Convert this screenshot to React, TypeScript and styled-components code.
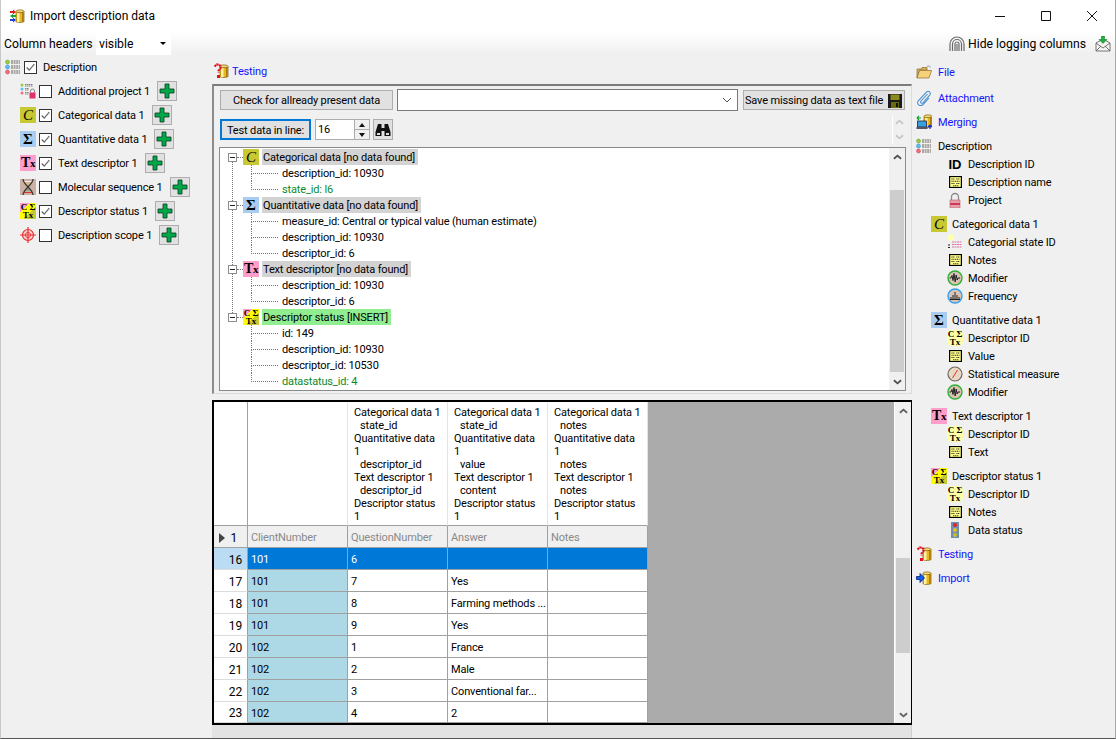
import React from "react"
import styled, { createGlobalStyle } from "styled-components"

const GlobalStyle = createGlobalStyle`
    html, body {
        margin: 0;
        padding: 0;
        background: #f0f0f0;
    }
    * {
        box-sizing: border-box;
    }
`

/* ---------- icons ---------- */

const Svg = styled.svg`
    width: 16px;
    height: 16px;
    flex: none;
    display: block;
`

const Cylinder = () => (
    <g>
        <path d="M7 3.5h8v10c0 1.2-8 1.2-8 0z" fill="#e8b820" stroke="#7a5a10" strokeWidth="0.7" />
        <rect x="8" y="4" width="2.5" height="10" fill="#fff2a8" />
        <rect x="13" y="4" width="1.6" height="10" fill="#b07a10" />
        <ellipse cx="11" cy="3.3" rx="4" ry="1.4" fill="#f6dc70" stroke="#7a5a10" strokeWidth="0.7" />
    </g>
)

const ImportTitleIcon = () => (
    <Svg viewBox="0 0 16 16">
        <Cylinder />
        <path d="M1 3h3V1.5L7 4 4 6.5V5H1z" fill="#e02020" />
        <path d="M7 7H4V5.8L1 8l3 2.2V9h3z" fill="#20a040" />
        <path d="M1 11h3V9.5L7 12l-3 2.5V13H1z" fill="#2040e0" />
    </Svg>
)

const TestingIcon = () => (
    <Svg viewBox="0 0 16 16">
        <Cylinder />
        <path d="M1.5 3.5 3.5 1.5h2.5L7.5 3v2.5L5.5 7.5v2" fill="none" stroke="#e01020" strokeWidth="2" strokeDasharray="2.2 .6" />
        <rect x="4" y="12" width="3" height="3" fill="#e01020" />
    </Svg>
)

const ImportIcon = () => (
    <Svg viewBox="0 0 16 16">
        <Cylinder />
        <path d="M.5 6.5h3.5V3.5L8.5 8 4 12.5V9.500H.5z" fill="#1060f0" stroke="#001a80" strokeWidth="0.8" />
    </Svg>
)

const FolderIcon = () => (
    <Svg viewBox="0 0 16 16">
        <path d="M1 5h4l1-1.500h5V6H3.500L1 14z" fill="#d9b45e" stroke="#8a6a2a" strokeWidth="0.7" />
        <path d="M1 14 3.500 6.500H15.500L13 14z" fill="#f6d27c" stroke="#8a6a2a" strokeWidth="0.7" />
        <path d="M11 2.500c1.500-1 3-.5 3.500 1" fill="none" stroke="#8f9ba8" strokeWidth="1" />
    </Svg>
)

const ClipIcon = () => (
    <Svg viewBox="0 0 16 16">
        <path d="M11.500 4 5 11c-1.200 1.500.8 3 2 1.800l6.500-7.500c2.200-2.600-1-5.500-3.300-3L2.500 10.500c-2.800 3.300 1.800 7 4.800 3.800L13 8" fill="none" stroke="#4a90d0" strokeWidth="1.100" />
    </Svg>
)

const MergingIcon = () => (
    <Svg viewBox="0 0 16 16">
        <g transform="translate(1 -1)"><Cylinder /></g>
        <rect x="1.500" y="7" width="9" height="6" fill="#3aa0e0" stroke="#223" strokeWidth="0.8" />
        <rect x="0.500" y="13" width="11" height="2" fill="#556" />
        <path d="M1 4h4M1 4l2-2M1 4l2 2" stroke="#10a030" strokeWidth="1.200" fill="none" />
        <path d="M14 15v-4M14 11l-2 2M14 11l2 2" stroke="#1030e0" strokeWidth="1.200" fill="none" />
    </Svg>
)

const DescriptionIcon = () => (
    <Svg viewBox="0 0 16 16">
        <circle cx="2.500" cy="3" r="2" fill="#9ccc3c" stroke="#5a9a20" strokeWidth="0.5" />
        <circle cx="2.500" cy="8" r="2" fill="#5cc0f0" stroke="#2080d0" strokeWidth="0.5" />
        <circle cx="2.500" cy="13" r="2" fill="#f07080" stroke="#d03050" strokeWidth="0.5" />
        <path d="M6 2h9M6 4h9M6 7h9M6 9h9M6 12h9M6 14h9" stroke="#6a6258" strokeWidth="1" strokeDasharray="2 .6" />
    </Svg>
)

const AdditionalProjectIcon = () => (
    <Svg viewBox="0 0 16 16">
        <circle cx="2" cy="2" r="1.500" fill="#9ccc3c" />
        <circle cx="2" cy="6" r="1.500" fill="#5cc0f0" />
        <circle cx="2" cy="10" r="1.500" fill="#f07080" />
        <path d="M5 1.500h8M5 3h8M5 5.500h4M5 7h4M5 9.500h4M5 11h4" stroke="#6a6258" strokeWidth="0.8" strokeDasharray="1.500 .5" />
        <path d="M10.500 9.500V8a2 2 0 0 1 4 0v1.500" fill="none" stroke="#888" strokeWidth="1" />
        <rect x="9.500" y="9.500" width="6" height="6" fill="#e03070" />
    </Svg>
)

const MolecularIcon = () => (
    <Svg viewBox="0 0 16 16">
        <rect width="16" height="16" fill="#cdb0a4" />
        <path d="M4 2.500h8" stroke="#f0f0f0" strokeWidth="1" />
        <path d="M6 5h4" stroke="#e8c030" strokeWidth="1" />
        <path d="M6.500 11h3" stroke="#30a040" strokeWidth="1" />
        <path d="M4 13.500h8" stroke="#e03030" strokeWidth="1" />
        <path d="M3 0c0 6 10 10 10 16M13 0C13 6 3 10 3 16" fill="none" stroke="#333" strokeWidth="1.200" />
    </Svg>
)

const ScopeIcon = () => (
    <Svg viewBox="0 0 16 16">
        <circle cx="8" cy="8" r="5.500" fill="#fbd0d0" stroke="#e83030" strokeWidth="1.200" />
        <circle cx="8" cy="8" r="2.500" fill="#fff" stroke="#e83030" strokeWidth="1" />
        <path d="M8 0v16M0 8h16" stroke="#e83030" strokeWidth="1.200" />
    </Svg>
)

const FingerprintIcon = () => (
    <Svg viewBox="0 0 16 16">
        <path d="M1 15V8a7 7 0 0 1 14 0v7M3.500 15V8a4.500 4.500 0 0 1 9 0v7M6 15V8a2 2 0 0 1 4 0v7M8 8v7" fill="none" stroke="#6a6a6a" strokeWidth="1.200" />
    </Svg>
)

const MailIcon = () => (
    <Svg viewBox="0 0 16 16">
        <path d="M1 7 8 3l7 4v8H1z" fill="#f4f4f0" stroke="#666" strokeWidth="0.9" />
        <path d="M1 7l7 5 7-5M1 15l5-5M15 15l-5-5" fill="none" stroke="#666" strokeWidth="0.9" />
        <path d="M6.500 0h3v3.500H12L8 7.500 4 3.500h2.500z" fill="#20b040" stroke="#0a7020" strokeWidth="0.5" />
    </Svg>
)

const NotesIcon = () => (
    <Svg viewBox="0 0 16 16" style={{ height: 12, width: 13 }} preserveAspectRatio="none">
        <rect x="0.750" y="0.750" width="14.500" height="14.500" fill="#ffff88" stroke="#000" strokeWidth="1.500" />
        <path d="M3 4h4M9 4h4M3 7h10M3 10h4M9 10h4M5 13h7" stroke="#222" strokeWidth="1.200" strokeDasharray="1.500 .7" />
    </Svg>
)

const LockIcon = () => (
    <Svg viewBox="0 0 16 16">
        <path d="M4.500 8V5a3.500 3.500 0 0 1 7 0v3" fill="none" stroke="#8a8a8a" strokeWidth="1.300" />
        <rect x="3" y="8" width="10" height="8" fill="#e8a0a8" stroke="#b06070" strokeWidth="0.6" />
        <rect x="3" y="11" width="10" height="2" fill="#d03a5a" />
    </Svg>
)

const StatesIcon = () => (
    <Svg viewBox="0 0 16 16">
        <path d="M5 8h10M5 10.500h10M5 13h10" stroke="#e070a0" strokeWidth="1" strokeDasharray="2 .5" />
        <path d="M1 11h2M1 13.500h2" stroke="#222" strokeWidth="1" />
        <circle cx="4" cy="3.500" r="3.200" fill="#ffffb0" />
    </Svg>
)

const RingIcon = ({ ring, wave }: { ring: string; wave: string }) => (
    <Svg viewBox="0 0 16 16">
        <circle cx="8" cy="8" r="7" fill="#d8c4b4" stroke={ring} strokeWidth="1.400" />
        <path d={wave} fill="none" stroke="#222" strokeWidth="1" />
    </Svg>
)

const ModifierIcon = () => <RingIcon ring="#30b030" wave="M2.500 8h1.500l1-2.500 1 5 1-7 1.200 8.500 1-7 1 5 .800-2h2" />
const FrequencyIcon = () => <RingIcon ring="#30a0f0" wave="M4 11V9M6 11V7M8 11V4M10 11V7M12 11V9M3 11.500h10" />

const GaugeIcon = () => (
    <Svg viewBox="0 0 16 16">
        <circle cx="8" cy="8" r="7" fill="#e8d8c4" stroke="#706860" strokeWidth="1.200" />
        <path d="M5.500 12 10.500 4" stroke="#e03030" strokeWidth="1" />
    </Svg>
)

const TrafficIcon = () => (
    <Svg viewBox="0 0 16 16">
        <rect x="4" y="0" width="8" height="16" fill="#6f8fb0" />
        <circle cx="8" cy="3" r="2" fill="#e82020" />
        <circle cx="8" cy="8" r="2" fill="#e8c020" />
        <circle cx="8" cy="13" r="2" fill="#c8c020" />
    </Svg>
)

const FloppyIcon = () => (
    <Svg viewBox="0 0 16 16">
        <path d="M1 1h14v14H1z" fill="#1a1a1a" />
        <rect x="3.500" y="1.500" width="9" height="5.500" fill="#8a8a20" />
        <rect x="4" y="9" width="8" height="6" fill="#6a6a10" />
        <rect x="9" y="10" width="2" height="4" fill="#111" />
    </Svg>
)

const BinocularsIcon = () => (
    <Svg viewBox="0 0 16 16">
        <path d="M3 2h3.500v4h3V2H13l2.500 8v4H9.500V9h-3v5H.5v-4z" fill="#111" />
        <rect x="2" y="11" width="3" height="2" fill="#dcdcdc" />
        <rect x="11" y="11" width="3" height="2" fill="#dcdcdc" />
    </Svg>
)

const PlusIcon = () => (
    <Svg viewBox="0 0 16 16">
        <path d="M6 1h4v5h5v4h-5v5H6v-5H1V6h5z" fill="#00a84a" stroke="#0b3a1c" strokeWidth="0.8" />
    </Svg>
)

const CheckMark = () => (
    <Svg viewBox="0 0 13 13" style={{ width: 11, height: 11 }}>
        <path d="M2 6.500 5 9.500 11 2.500" fill="none" stroke="#6a6a6a" strokeWidth="1.500" />
    </Svg>
)

const WindowGlyph = ({ d }: { d: string }) => (
    <Svg viewBox="0 0 12 12" style={{ width: 12, height: 12 }}>
        <path d={d} fill="none" stroke="#111" strokeWidth="1" />
    </Svg>
)

const Chevron = ({ up, color }: { up?: boolean; color: string }) => (
    <Svg viewBox="0 0 10 6" style={{ width: 9, height: 6 }}>
        <path d={up ? "M1 5 5 1.500 9 5" : "M1 1 5 4.500 9 1"} fill="none" stroke={color} strokeWidth="2" />
    </Svg>
)

/* ---------- letter tiles ---------- */

const Tile = styled.span<{ $bg: string; $italic?: boolean }>`
    width: 16px;
    height: 16px;
    flex: none;
    display: flex;
    align-items: center;
    justify-content: center;
    background: ${(p) => p.$bg};
    color: #000;
    font-family: "Liberation Serif", serif;
    font-weight: ${(p) => (p.$italic ? 400 : 700)};
    font-size: ${(p) => (p.$italic ? 15 : 15)}px;
    line-height: 16px;
    letter-spacing: 0;
    font-style: ${(p) => (p.$italic ? "italic" : "normal")};
`

const TxLetters = styled.span`
    font-size: 14px;
    letter-spacing: -0.5px;
    small {
        font-size: 11px;
    }
`

const MiniTile = styled.span<{ $bg: string; $round?: boolean }>`
    width: 16px;
    height: 16px;
    flex: none;
    display: flex;
    flex-direction: column;
    align-items: center;
    justify-content: center;
    background: ${(p) => p.$bg};
    border-radius: ${(p) => (p.$round ? "5px" : "0")};
    color: #000;
    font-family: "Liberation Serif", serif;
    font-weight: 700;
    font-size: 9px;
    line-height: 8px;
    letter-spacing: 0;
    white-space: pre;
`

const CIcon = () => <Tile $bg="#c8c832" $italic>C</Tile>
const SigmaIcon = () => <Tile $bg="#a8cdf0">Σ</Tile>
const TxIcon = () => <Tile $bg="#ff9ecb"><TxLetters>T<small>x</small></TxLetters></Tile>
const StatusIcon = () => (
    <MiniTile $bg="linear-gradient(135deg, #ff9ecb 0 30%, #ffff00 30% 62%, #c8c832 62%)">
        <span>C Σ</span>
        <span>Tx</span>
    </MiniTile>
)
const DescriptorIdIcon = () => (
    <MiniTile $bg="#ffffa8" $round>
        <span>C Σ</span>
        <span>Tx</span>
    </MiniTile>
)

const IdGlyph = styled.span`
    width: 16px;
    flex: none;
    font-family: "Liberation Sans", sans-serif;
    font-weight: 700;
    font-size: 13px;
    letter-spacing: 0;
    color: #000;
    text-align: center;
`

/* ---------- frame ---------- */

const Page = styled.div`
    width: 1116px;
    height: 739px;
    display: flex;
    flex-direction: column;
    overflow: hidden;
    background: #f0f0f0;
    border-right: 1px solid #a8a8a8;
    border-left: 1px solid #c8c8c8;
    border-bottom: 1px solid #555;
    font-family: "Roboto", "Liberation Sans", sans-serif;
    font-size: 11px;
    letter-spacing: -0.15px;
    color: #000;
`

const TitleBar = styled.div`
    height: 32px;
    flex: none;
    display: flex;
    align-items: center;
    gap: 5px;
    padding-left: 8px;
    background: #fff;
`

const TitleText = styled.span`
    font-size: 12px;
    letter-spacing: 0;
`

const WindowButtons = styled.div`
    margin-left: auto;
    display: flex;
`

const WindowButton = styled.div`
    width: 46px;
    height: 30px;
    display: flex;
    align-items: center;
    justify-content: center;
`

const Toolbar = styled.div`
    height: 23px;
    flex: none;
    display: flex;
    align-items: center;
    padding-left: 3px;
    background: linear-gradient(#fff, #efefef);
    font-size: 12.2px;
    letter-spacing: 0;
`

const ToolbarLabel = styled.span`
    width: 92px;
    white-space: nowrap;
`

const HeaderSelect = styled.div`
    width: 75px;
    height: 22px;
    display: flex;
    align-items: center;
    justify-content: space-between;
    padding: 0 5px 0 3px;
    background: #fff;
`

const SmallCaret = styled.span`
    width: 0;
    height: 0;
    border-left: 3px solid transparent;
    border-right: 3px solid transparent;
    border-top: 3px solid #000;
`

const ToolbarRight = styled.div`
    margin-left: auto;
    display: flex;
    align-items: center;
    padding-right: 4px;
`

const LoggingLabel = styled.span`
    margin: 0 9px 0 3px;
`

const Main = styled.div`
    flex: 1;
    display: flex;
    min-height: 0;
`

/* ---------- left column ---------- */

const LeftColumn = styled.div`
    width: 211px;
    flex: none;
    display: flex;
    flex-direction: column;
`

const TableRow = styled.div<{ $indent?: boolean }>`
    height: 24px;
    display: flex;
    align-items: center;
    padding-left: ${(p) => (p.$indent ? "19px" : "4px")};
`

const CheckBox = styled.span`
    width: 13px;
    height: 13px;
    flex: none;
    margin: 0 6px 0 3px;
    display: flex;
    align-items: center;
    justify-content: center;
    background: #fff;
    border: 1px solid #333;
`

const RowLabel = styled.span`
    white-space: nowrap;
`

const PlusButton = styled.div`
    width: 20px;
    height: 20px;
    flex: none;
    margin-left: 7px;
    display: flex;
    align-items: center;
    justify-content: center;
    background: #e1e1e1;
    border: 1px solid #adadad;
`

/* ---------- centre column ---------- */

const CenterColumn = styled.div`
    width: 700px;
    flex: none;
    display: flex;
    flex-direction: column;
`

const CenterHeader = styled.div`
    height: 29px;
    flex: none;
    display: flex;
    align-items: center;
    gap: 3px;
    padding: 3px 0 0 1px;
`

const LinkText = styled.span`
    color: #1414ff;
`

const GroupBox = styled.div`
    height: 310px;
    flex: none;
    display: flex;
    flex-direction: column;
    padding: 3px 4px 0 5px;
    border-top: 2px solid #7c7c7c;
    border-left: 2px solid #8c8c8c;
    border-right: 1px solid #dcdcdc;
    border-bottom: 1px solid #dcdcdc;
`

const ButtonRow = styled.div`
    display: flex;
    align-items: center;
    padding-left: 1px;
`

const ActionButton = styled.div<{ $width: number; $focused?: boolean }>`
    width: ${(p) => p.$width}px;
    height: ${(p) => (p.$focused ? 21 : 20)}px;
    flex: none;
    display: flex;
    align-items: center;
    justify-content: center;
    gap: 4px;
    padding-top: 1px;
    background: #e1e1e1;
    border: ${(p) => (p.$focused ? "2px solid #0078d7" : "1px solid #adadad")};
    white-space: nowrap;
`

const ComboBox = styled.div`
    width: 341px;
    height: 22px;
    flex: none;
    margin: 0 5px 0 4px;
    display: flex;
    align-items: center;
    justify-content: flex-end;
    padding-right: 5px;
    background: #fff;
    border: 1px solid #7a7a7a;
`

const ChevronThin = styled.svg`
    width: 10px;
    height: 6px;
`

const SecondRow = styled(ButtonRow)`
    margin-top: 8px;
    height: 21px;
`

const Spinner = styled.div`
    width: 55px;
    height: 21px;
    flex: none;
    margin: 0 3px 0 4px;
    display: flex;
    align-items: center;
    justify-content: space-between;
    padding-left: 2px;
    background: #fff;
    border: 1px solid #adadad;
`

const SpinnerArrows = styled.div`
    width: 15px;
    height: 100%;
    display: flex;
    flex-direction: column;
    border-left: 1px solid #adadad;
`

const SpinnerArrow = styled.div<{ $up?: boolean }>`
    flex: 1;
    display: flex;
    align-items: center;
    justify-content: center;
    background: #f0f0f0;
    border-bottom: ${(p) => (p.$up ? "1px solid #adadad" : "0")};
    &::before {
        content: "";
        border-left: 3px solid transparent;
        border-right: 3px solid transparent;
        border-${(p) => (p.$up ? "bottom" : "top")}: 4px solid #111;
    }
`

const IconButton = styled.div`
    width: 20px;
    height: 21px;
    flex: none;
    display: flex;
    align-items: center;
    justify-content: center;
    background: #e1e1e1;
    border: 1px solid #adadad;
`

const DisabledSpin = styled.div`
    margin-left: auto;
    margin-right: 1px;
    width: 14px;
    height: 29px;
    margin-top: -4px;
    margin-bottom: -4px;
    display: flex;
    flex-direction: column;
    align-items: center;
    justify-content: space-around;
    border-left: 1px solid #fff;
`

const TreeBox = styled.div`
    height: 244px;
    width: 687px;
    flex: none;
    margin-top: 7px;
    display: flex;
    background: #fff;
    border: 1px solid #8a8a8a;
`

const TreeBody = styled.div`
    flex: 1;
    padding-top: 1px;
    overflow: hidden;
`

const TreeGroup = styled.div<{ $last?: boolean }>`
    position: relative;
    &::before {
        content: "";
        display: ${(p) => (p.$last ? "none" : "block")};
        position: absolute;
        left: 12px;
        top: 8px;
        bottom: -8px;
        border-left: 1px dotted #777;
    }
`

const TreeHead = styled.div`
    position: relative;
    height: 16px;
    display: flex;
    align-items: center;
    padding-left: 8px;
`

const Expander = styled.span`
    position: relative;
    z-index: 1;
    width: 9px;
    height: 9px;
    flex: none;
    margin-right: 6px;
    background: #fff;
    border: 1px solid #8c8c8c;
    &::before {
        content: "";
        position: absolute;
        left: 1px;
        right: 1px;
        top: 3px;
        height: 1px;
        background: #222;
    }
    &::after {
        content: "";
        position: absolute;
        left: 8px;
        top: 3px;
        width: 6px;
        border-top: 1px dotted #777;
    }
`

const TreeLabel = styled.span<{ $bg: string }>`
    height: 16px;
    margin-left: 3px;
    padding: 1px 3px 0 1px;
    line-height: 16px;
    background: ${(p) => p.$bg};
    white-space: nowrap;
`

const TreeLeaf = styled.div<{ $green?: boolean }>`
    position: relative;
    height: 16px;
    padding-left: 62px;
    line-height: 18px;
    white-space: nowrap;
    color: ${(p) => (p.$green ? "#0a8a2a" : "#000")};
    &::before {
        content: "";
        position: absolute;
        left: 31px;
        top: 0;
        width: 26px;
        height: 8px;
        border-left: 1px dotted #777;
        border-bottom: 1px dotted #777;
    }
    &:not(:last-child)::after {
        content: "";
        position: absolute;
        left: 31px;
        top: 8px;
        height: 8px;
        border-left: 1px dotted #777;
    }
`

const ScrollBar = styled.div<{ $width: number }>`
    width: ${(p) => p.$width}px;
    flex: none;
    display: flex;
    flex-direction: column;
    background: #f0f0f0;
`

const ScrollArrow = styled.div`
    height: 17px;
    flex: none;
    display: flex;
    align-items: center;
    justify-content: center;
`

const ScrollTrack = styled.div<{ $offset: number }>`
    flex: 1;
    min-height: 0;
    padding: ${(p) => p.$offset}px 1px 0;
`

const ScrollThumb = styled.div<{ $height: number }>`
    height: ${(p) => p.$height}px;
    background: #cdcdcd;
`

/* ---------- data grid ---------- */

const GridFrame = styled.div`
    height: 325px;
    flex: none;
    margin-top: 6px;
    display: flex;
    border: 2px solid #000;
    border-right-width: 1px;
    background: #ababab;
`

const DataGrid = styled.div`
    flex: none;
    display: grid;
    grid-template-columns: 34px 100px 100px 100px 100px;
    grid-template-rows: 124px 22px repeat(7, 22px) 21px;
    align-content: start;
    background: #fff;
`

const GridFiller = styled.div`
    flex: 1;
    border-right: 1px solid #fff;
`

const HeaderCell = styled.div<{ $strong?: boolean }>`
    padding: 4px 0 0 6px;
    background: #fff;
    border-right: 1px solid ${(p) => (p.$strong ? "#a0a0a0" : "#e4e4e4")};
    border-bottom: 1px solid #a0a0a0;
    line-height: 13px;
    overflow: hidden;
`

const HeaderLine = styled.div<{ $indent?: boolean }>`
    padding-left: ${(p) => (p.$indent ? "6px" : "0")};
    white-space: nowrap;
`

const RowHeader = styled.div<{ $selected?: boolean }>`
    display: flex;
    align-items: center;
    justify-content: flex-end;
    padding: 2px 5px 0 0;
    font-size: 12px;
    background: ${(p) => (p.$selected ? "#bbdcf3" : "#fff")};
    border-right: 1px solid #a0a0a0;
    border-bottom: 1px solid #dcdcdc;
`

const ColumnRowHeader = styled(RowHeader)`
    justify-content: space-between;
    padding-left: 5px;
    padding-right: 10px;
    background: #f0f0f0;
    border-bottom: 1px solid #a0a0a0;
    &::before {
        content: "";
        border-top: 5px solid transparent;
        border-bottom: 5px solid transparent;
        border-left: 6px solid #444;
    }
`

const Cell = styled.div<{ $kind?: "key" | "selected" | "title" }>`
    display: flex;
    align-items: center;
    padding: 2px 0 0 3px;
    white-space: nowrap;
    overflow: hidden;
    border-right: 1px solid #a0a0a0;
    border-bottom: 1px solid #a0a0a0;
    background: ${(p) =>
        p.$kind === "selected" ? "#0078d7" : p.$kind === "key" ? "#add8e6" : p.$kind === "title" ? "#f0f0f0" : "#fff"};
    color: ${(p) => (p.$kind === "selected" ? "#fff" : p.$kind === "title" ? "#8a8a8a" : "#000")};
`

const BottomBar = styled.div`
    height: 13px;
    flex: none;
    background: #e3e3e3;
    border-right: 1px solid #cfcfcf;
`

/* ---------- right column ---------- */

const RightColumn = styled.div`
    flex: 1;
    display: flex;
    flex-direction: column;
    padding: 8px 0 0 4px;
`

const NavLink = styled.div<{ $top?: number }>`
    height: 18px;
    flex: none;
    display: flex;
    align-items: center;
    gap: 6px;
    margin-top: ${(p) => p.$top ?? 6}px;
`

const NavGroupHead = styled(NavLink)`
    padding-left: 15px;
    gap: 5px;
    white-space: nowrap;
`

const NavLeaf = styled.div`
    height: 18px;
    flex: none;
    display: flex;
    align-items: center;
    gap: 5px;
    padding-left: 31px;
    white-space: nowrap;
`

const LeafIconSlot = styled.span`
    width: 16px;
    height: 16px;
    flex: none;
    display: flex;
    align-items: center;
    justify-content: center;
`

/* ---------- data ---------- */

const leftRows = [
    { icon: <AdditionalProjectIcon />, label: "Additional project 1", checked: false },
    { icon: <CIcon />, label: "Categorical data 1", checked: true },
    { icon: <SigmaIcon />, label: "Quantitative data 1", checked: true },
    { icon: <TxIcon />, label: "Text descriptor 1", checked: true },
    { icon: <MolecularIcon />, label: "Molecular sequence 1", checked: false },
    { icon: <StatusIcon />, label: "Descriptor status 1", checked: true },
    { icon: <ScopeIcon />, label: "Description scope 1", checked: false },
]

const treeGroups = [
    {
        icon: <CIcon />,
        label: "Categorical data [no data found]",
        bg: "#d3d3d3",
        leaves: [{ text: "description_id: 10930" }, { text: "state_id: l6", green: true }],
    },
    {
        icon: <SigmaIcon />,
        label: "Quantitative data [no data found]",
        bg: "#d3d3d3",
        leaves: [
            { text: "measure_id: Central or typical value (human estimate)" },
            { text: "description_id: 10930" },
            { text: "descriptor_id: 6" },
        ],
    },
    {
        icon: <TxIcon />,
        label: "Text descriptor [no data found]",
        bg: "#d3d3d3",
        leaves: [{ text: "description_id: 10930" }, { text: "descriptor_id: 6" }],
    },
    {
        icon: <StatusIcon />,
        label: "Descriptor status [INSERT]",
        bg: "#90ee90",
        leaves: [
            { text: "id: 149" },
            { text: "description_id: 10930" },
            { text: "descriptor_id: 10530" },
            { text: "datastatus_id: 4", green: true },
        ],
    },
]

const headerColumns = [
    ["state_id", "descriptor_id", "descriptor_id"],
    ["state_id", "value", "content"],
    ["notes", "notes", "notes"],
]

const gridRows = [
    ["17", "101", "7", "Yes"],
    ["18", "101", "8", "Farming methods ..."],
    ["19", "101", "9", "Yes"],
    ["20", "102", "1", "France"],
    ["21", "102", "2", "Male"],
    ["22", "102", "3", "Conventional far..."],
    ["23", "102", "4", "2"],
]

const navGroups = [
    {
        icon: <CIcon />,
        label: "Categorical data 1",
        leaves: [
            { icon: <StatesIcon />, label: "Categorial state ID" },
            { icon: <NotesIcon />, label: "Notes" },
            { icon: <ModifierIcon />, label: "Modifier" },
            { icon: <FrequencyIcon />, label: "Frequency" },
        ],
    },
    {
        icon: <SigmaIcon />,
        label: "Quantitative data 1",
        leaves: [
            { icon: <DescriptorIdIcon />, label: "Descriptor ID" },
            { icon: <NotesIcon />, label: "Value" },
            { icon: <GaugeIcon />, label: "Statistical measure" },
            { icon: <ModifierIcon />, label: "Modifier" },
        ],
    },
    {
        icon: <TxIcon />,
        label: "Text descriptor 1",
        leaves: [
            { icon: <DescriptorIdIcon />, label: "Descriptor ID" },
            { icon: <NotesIcon />, label: "Text" },
        ],
    },
    {
        icon: <StatusIcon />,
        label: "Descriptor status 1",
        leaves: [
            { icon: <DescriptorIdIcon />, label: "Descriptor ID" },
            { icon: <NotesIcon />, label: "Notes" },
            { icon: <TrafficIcon />, label: "Data status" },
        ],
    },
]

export default function App() {
    return (
        <Page>
            <GlobalStyle />
            <TitleBar>
                <ImportTitleIcon />
                <TitleText>Import description data</TitleText>
                <WindowButtons>
                    <WindowButton><WindowGlyph d="M1 6.500h10" /></WindowButton>
                    <WindowButton><WindowGlyph d="M1.500 1.500h9v9h-9z" /></WindowButton>
                    <WindowButton><WindowGlyph d="M1 1l10 10M11 1 1 11" /></WindowButton>
                </WindowButtons>
            </TitleBar>
            <Toolbar>
                <ToolbarLabel>Column headers</ToolbarLabel>
                <HeaderSelect>visible<SmallCaret /></HeaderSelect>
                <ToolbarRight>
                    <FingerprintIcon />
                    <LoggingLabel>Hide logging columns</LoggingLabel>
                    <MailIcon />
                </ToolbarRight>
            </Toolbar>
            <Main>
                <LeftColumn>
                    <TableRow>
                        <DescriptionIcon />
                        <CheckBox><CheckMark /></CheckBox>
                        <RowLabel>Description</RowLabel>
                    </TableRow>
                    {leftRows.map((row) => (
                        <TableRow $indent key={row.label}>
                            {row.icon}
                            <CheckBox>{row.checked && <CheckMark />}</CheckBox>
                            <RowLabel>{row.label}</RowLabel>
                            <PlusButton><PlusIcon /></PlusButton>
                        </TableRow>
                    ))}
                </LeftColumn>

                <CenterColumn>
                    <CenterHeader>
                        <TestingIcon />
                        <LinkText>Testing</LinkText>
                    </CenterHeader>
                    <GroupBox>
                        <ButtonRow>
                            <ActionButton $width={173}>Check for allready present data</ActionButton>
                            <ComboBox>
                                <ChevronThin viewBox="0 0 10 6">
                                    <path d="M1 1 5 5 9 1" fill="none" stroke="#555" strokeWidth="1" />
                                </ChevronThin>
                            </ComboBox>
                            <ActionButton $width={162}>Save missing data as text file <FloppyIcon /></ActionButton>
                        </ButtonRow>
                        <SecondRow>
                            <ActionButton $width={91} $focused>Test data in line:</ActionButton>
                            <Spinner>
                                16
                                <SpinnerArrows>
                                    <SpinnerArrow $up />
                                    <SpinnerArrow />
                                </SpinnerArrows>
                            </Spinner>
                            <IconButton><BinocularsIcon /></IconButton>
                            <DisabledSpin>
                                <Chevron up color="#c8c8c8" />
                                <Chevron color="#c8c8c8" />
                            </DisabledSpin>
                        </SecondRow>
                        <TreeBox>
                            <TreeBody>
                                {treeGroups.map((group, index) => (
                                    <TreeGroup key={group.label} $last={index === treeGroups.length - 1}>
                                        <TreeHead>
                                            <Expander />
                                            {group.icon}
                                            <TreeLabel $bg={group.bg}>{group.label}</TreeLabel>
                                        </TreeHead>
                                        <div>
                                            {group.leaves.map((leaf) => (
                                                <TreeLeaf key={leaf.text} $green={leaf.green}>{leaf.text}</TreeLeaf>
                                            ))}
                                        </div>
                                    </TreeGroup>
                                ))}
                            </TreeBody>
                            <ScrollBar $width={16}>
                                <ScrollArrow><Chevron up color="#505050" /></ScrollArrow>
                                <ScrollTrack $offset={25}><ScrollThumb $height={182} /></ScrollTrack>
                                <ScrollArrow><Chevron color="#505050" /></ScrollArrow>
                            </ScrollBar>
                        </TreeBox>
                    </GroupBox>

                    <GridFrame>
                        <DataGrid>
                            <HeaderCell $strong />
                            <HeaderCell />
                            {headerColumns.map((sub, index) => (
                                <HeaderCell key={index}>
                                    <HeaderLine>Categorical data 1</HeaderLine>
                                    <HeaderLine $indent>{sub[0]}</HeaderLine>
                                    <HeaderLine>Quantitative data</HeaderLine>
                                    <HeaderLine>1</HeaderLine>
                                    <HeaderLine $indent>{sub[1]}</HeaderLine>
                                    <HeaderLine>Text descriptor 1</HeaderLine>
                                    <HeaderLine $indent>{sub[2]}</HeaderLine>
                                    <HeaderLine>Descriptor status</HeaderLine>
                                    <HeaderLine>1</HeaderLine>
                                </HeaderCell>
                            ))}

                            <ColumnRowHeader>1</ColumnRowHeader>
                            <Cell $kind="title">ClientNumber</Cell>
                            <Cell $kind="title">QuestionNumber</Cell>
                            <Cell $kind="title">Answer</Cell>
                            <Cell $kind="title">Notes</Cell>

                            <RowHeader $selected>16</RowHeader>
                            <Cell $kind="selected">101</Cell>
                            <Cell $kind="selected">6</Cell>
                            <Cell $kind="selected" />
                            <Cell $kind="selected" />

                            {gridRows.map((row) => (
                                <React.Fragment key={row[0]}>
                                    <RowHeader>{row[0]}</RowHeader>
                                    <Cell $kind="key">{row[1]}</Cell>
                                    <Cell>{row[2]}</Cell>
                                    <Cell>{row[3]}</Cell>
                                    <Cell />
                                </React.Fragment>
                            ))}
                        </DataGrid>
                        <GridFiller />
                        <ScrollBar $width={16}>
                            <ScrollArrow><Chevron up color="#606060" /></ScrollArrow>
                            <ScrollTrack $offset={139}><ScrollThumb $height={95} /></ScrollTrack>
                            <ScrollArrow><Chevron color="#606060" /></ScrollArrow>
                        </ScrollBar>
                    </GridFrame>
                    <BottomBar />
                </CenterColumn>

                <RightColumn>
                    <NavLink $top={0}><FolderIcon /><LinkText>File</LinkText></NavLink>
                    <NavLink $top={8}><ClipIcon /><LinkText>Attachment</LinkText></NavLink>
                    <NavLink><MergingIcon /><LinkText>Merging</LinkText></NavLink>
                    <NavLink><DescriptionIcon />Description</NavLink>
                    <NavLeaf><IdGlyph>ID</IdGlyph>Description ID</NavLeaf>
                    <NavLeaf><LeafIconSlot><NotesIcon /></LeafIconSlot>Description name</NavLeaf>
                    <NavLeaf><LockIcon />Project</NavLeaf>
                    {navGroups.map((group) => (
                        <React.Fragment key={group.label}>
                            <NavGroupHead>{group.icon}{group.label}</NavGroupHead>
                            {group.leaves.map((leaf) => (
                                <NavLeaf key={leaf.label}>
                                    <LeafIconSlot>{leaf.icon}</LeafIconSlot>
                                    {leaf.label}
                                </NavLeaf>
                            ))}
                        </React.Fragment>
                    ))}
                    <NavLink><TestingIcon /><LinkText>Testing</LinkText></NavLink>
                    <NavLink><ImportIcon /><LinkText>Import</LinkText></NavLink>
                </RightColumn>
            </Main>
        </Page>
    )
}
